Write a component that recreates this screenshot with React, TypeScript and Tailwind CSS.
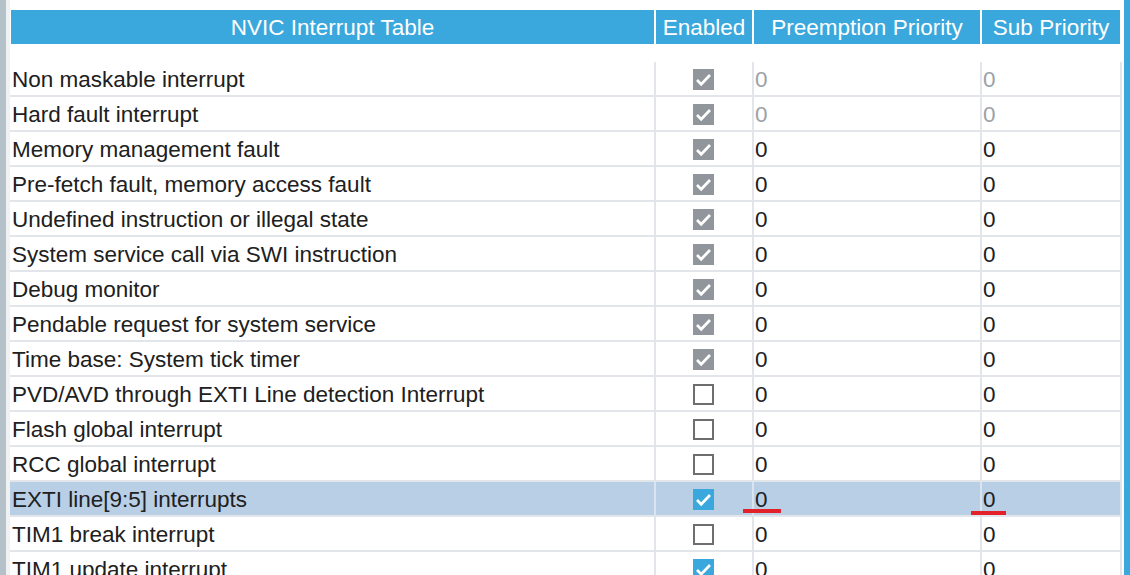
import React from "react";

type Row = { name: string; state: "locked" | "off" | "on"; gray?: boolean; selected?: boolean };

const rows: Row[] = [
  { name: "Non maskable interrupt", state: "locked", gray: true },
  { name: "Hard fault interrupt", state: "locked", gray: true },
  { name: "Memory management fault", state: "locked" },
  { name: "Pre-fetch fault, memory access fault", state: "locked" },
  { name: "Undefined instruction or illegal state", state: "locked" },
  { name: "System service call via SWI instruction", state: "locked" },
  { name: "Debug monitor", state: "locked" },
  { name: "Pendable request for system service", state: "locked" },
  { name: "Time base: System tick timer", state: "locked" },
  { name: "PVD/AVD through EXTI Line detection Interrupt", state: "off" },
  { name: "Flash global interrupt", state: "off" },
  { name: "RCC global interrupt", state: "off" },
  { name: "EXTI line[9:5] interrupts", state: "on", selected: true },
  { name: "TIM1 break interrupt", state: "off" },
  { name: "TIM1 update interrupt", state: "on" },
];

function Check() {
  return (
    <svg width="21" height="21" viewBox="0 0 21 21" className="block">
      <path d="M4 11 L8.2 15.2 L17 6" fill="none" stroke="#ffffff" strokeWidth="2.7" strokeLinecap="butt" strokeLinejoin="miter" />
    </svg>
  );
}

function Box({ state }: { state: Row["state"] }) {
  if (state === "off")
    return <div className="w-[21px] h-[21px] border-2 border-[#6e6e6e] bg-white" />;
  if (state === "on")
    return (
      <div className="w-[21px] h-[21px] bg-[#3aa8dc]">
        <Check />
      </div>
    );
  return (
    <div className="w-[21px] h-[21px] bg-[#90969b]">
      <Check />
    </div>
  );
}

export default function App() {
  return (
    <div
      className="w-[1130px] h-[575px] overflow-hidden bg-white flex text-[22.5px] text-[#202020]"
      style={{ fontFamily: '"Liberation Sans", Arial, sans-serif' }}
    >
      <div className="w-[6px] shrink-0 bg-[#b5c1c9]" />
      <div className="w-[4px] shrink-0 bg-[#eff1f3]" />
      <div className="w-[1112px] shrink-0 flex flex-col">
        <div className="h-[10px] shrink-0" />
        <div className="grid grid-cols-[646px_98px_228px_140px] h-[33px] shrink-0 text-white leading-[33px] text-center">
          <div className="bg-[#3aa8dc] border-r-2 border-white border-l border-l-white pt-px">NVIC Interrupt Table</div>
          <div className="bg-[#3aa8dc] border-r-2 border-white pt-px">Enabled</div>
          <div className="bg-[#3aa8dc] border-r-2 border-white pt-px">Preemption Priority</div>
          <div className="bg-[#3aa8dc] border-r-2 border-white pt-px">Sub Priority</div>
        </div>
        <div className="h-[19px] shrink-0" />
        {rows.map((r, i) => {
          const line = r.selected ? "border-[#dbe4ee]" : "border-[#e2e5e9]";
          const zero = r.gray ? "text-[#9ca1a6]" : "text-[#202020]";
          return (
            <div
              key={i}
              className={`grid grid-cols-[646px_98px_228px_140px] h-[35px] shrink-0 border-b-2 border-[#e2e5e9] leading-[33px] ${
                r.selected ? "bg-[#b9cfe5]" : "bg-white"
              }`}
            >
              <div className={`border-r-2 ${line} pl-[2px] pt-px whitespace-nowrap`}>{r.name}</div>
              <div className={`border-r-2 ${line} flex items-center justify-center pr-[1px]`}>
                <Box state={r.state} />
              </div>
              <div className={`relative border-r-2 ${line} pl-[1px] pt-px ${zero}`}>
                0
                {r.selected && (
                  <div className="absolute left-[-11px] top-[27px] w-[38px] h-[4px] bg-[#e3212b]" />
                )}
              </div>
              <div className={`relative border-r-2 ${line} pl-[1px] pt-px ${zero}`}>
                0
                {r.selected && (
                  <div className="absolute left-[-11px] top-[29px] w-[35px] h-[4px] bg-[#e3212b]" />
                )}
              </div>
            </div>
          );
        })}
      </div>
      <div className="w-[2px] shrink-0" />
      <div className="w-[6px] shrink-0 bg-[#3aa8dc]" />
    </div>
  );
}
